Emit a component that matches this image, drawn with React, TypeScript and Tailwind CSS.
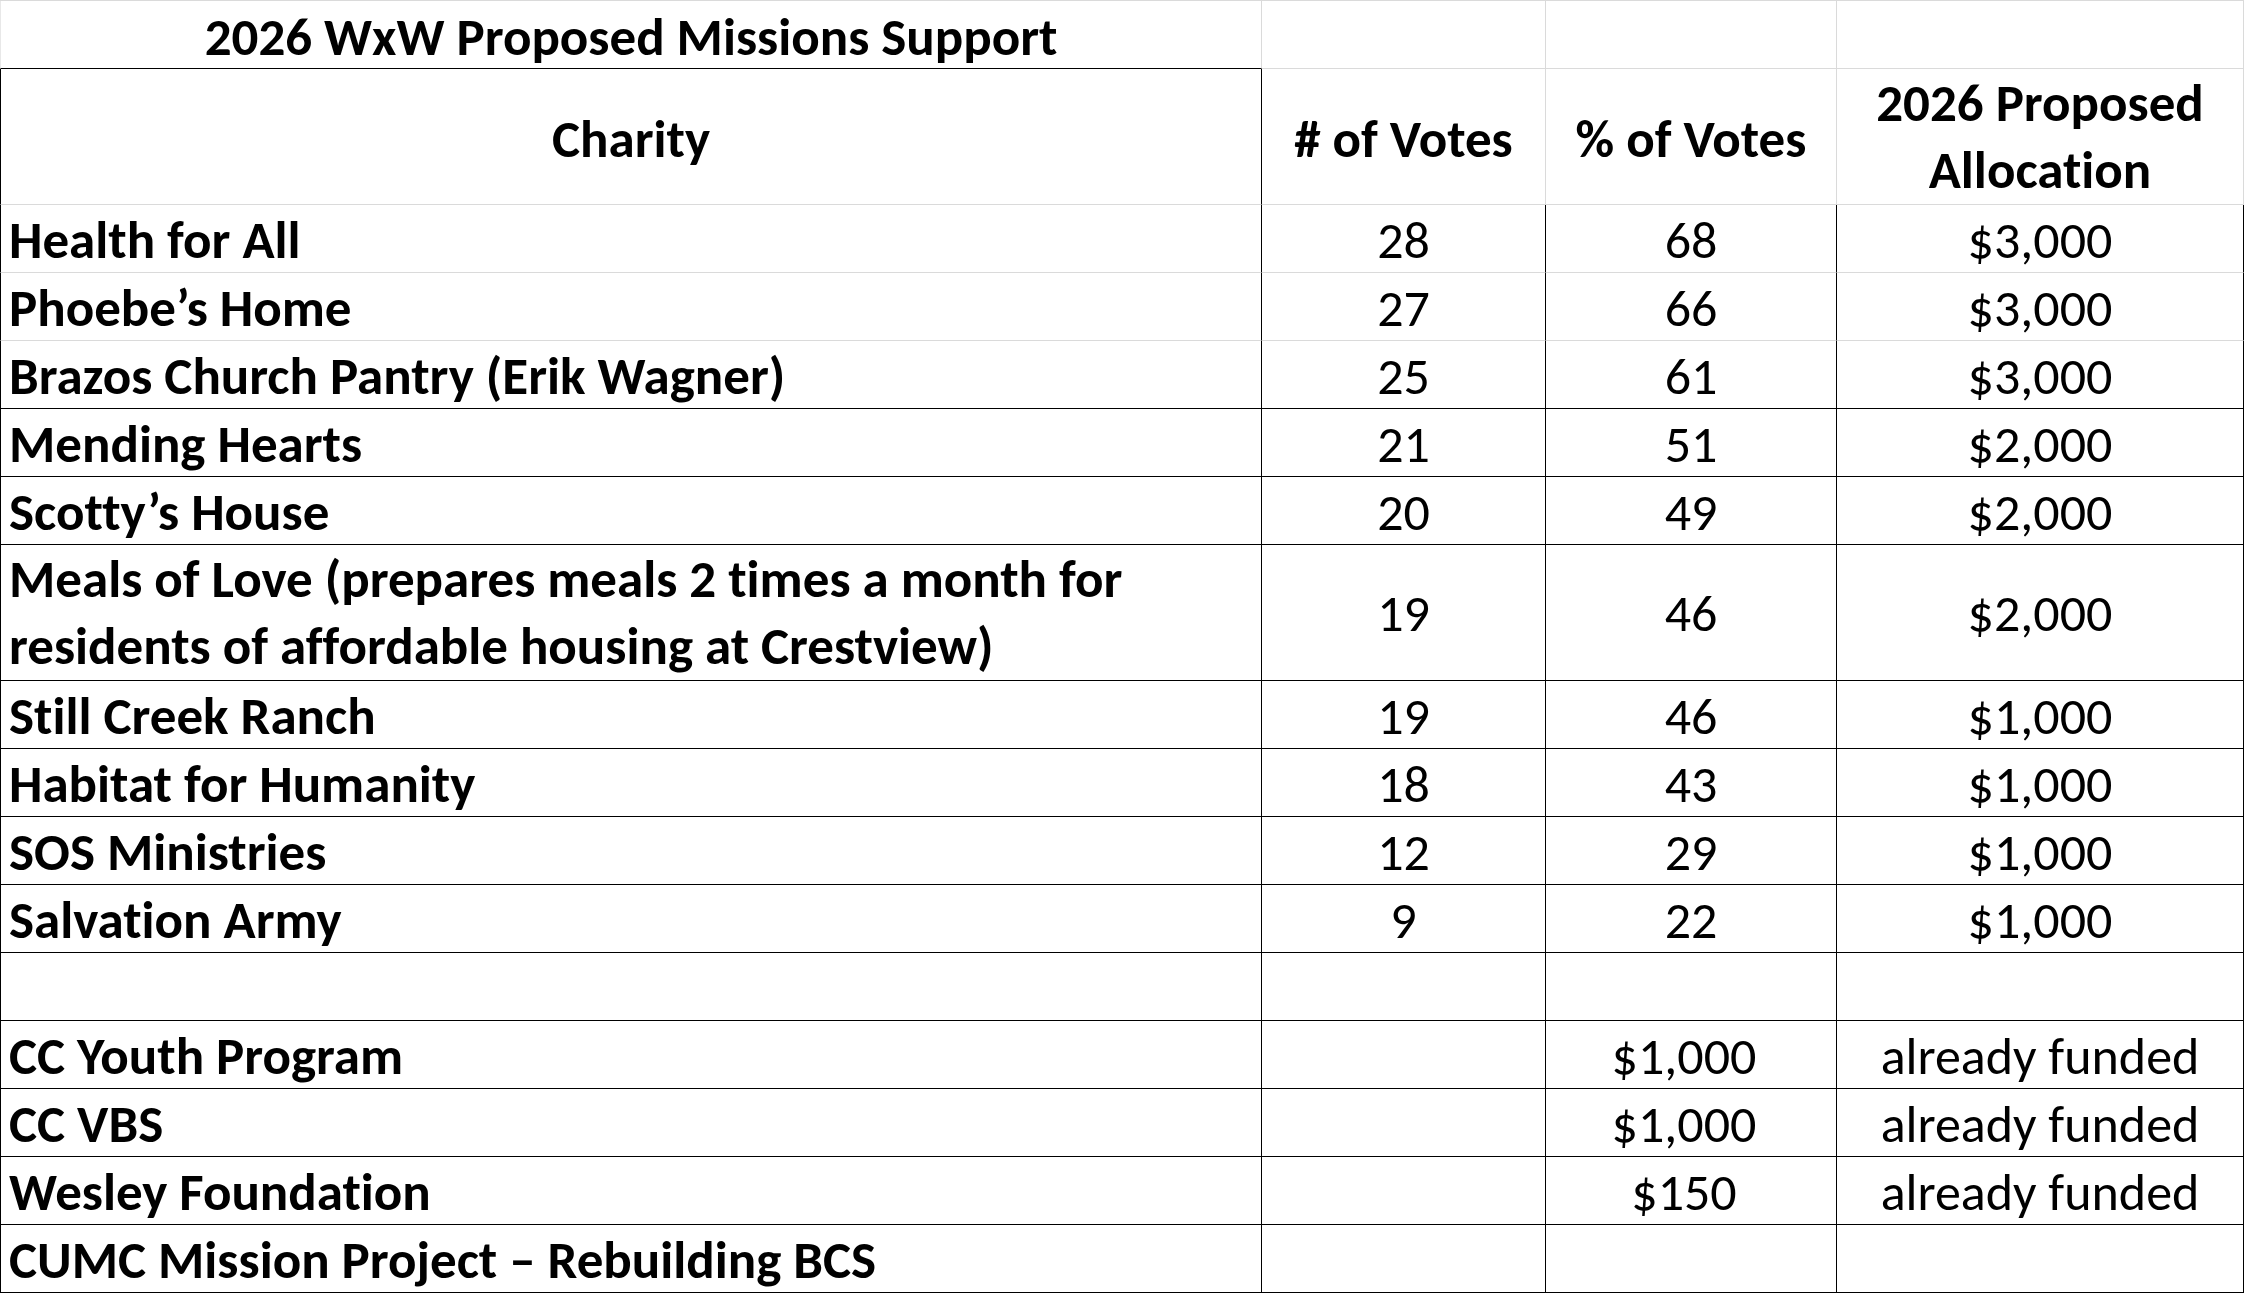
import React from "react";

type RowData = {
  name: string;
  votes?: string;
  pct?: string;
  alloc?: string;
  bottom: "gray" | "black";
  tall?: boolean;
  pctPad?: boolean;
};

const rows: RowData[] = [
  { name: "Health for All", votes: "28", pct: "68", alloc: "$3,000", bottom: "gray" },
  { name: "Phoebe\u2019s Home", votes: "27", pct: "66", alloc: "$3,000", bottom: "gray" },
  { name: "Brazos Church Pantry (Erik Wagner)", votes: "25", pct: "61", alloc: "$3,000", bottom: "black" },
  { name: "Mending Hearts", votes: "21", pct: "51", alloc: "$2,000", bottom: "black" },
  { name: "Scotty\u2019s House", votes: "20", pct: "49", alloc: "$2,000", bottom: "black" },
  {
    name: "Meals of Love (prepares meals 2 times a month for residents of affordable housing at Crestview)",
    votes: "19",
    pct: "46",
    alloc: "$2,000",
    bottom: "black",
    tall: true,
  },
  { name: "Still Creek Ranch", votes: "19", pct: "46", alloc: "$1,000", bottom: "black" },
  { name: "Habitat for Humanity", votes: "18", pct: "43", alloc: "$1,000", bottom: "black" },
  { name: "SOS Ministries", votes: "12", pct: "29", alloc: "$1,000", bottom: "black" },
  { name: "Salvation Army", votes: "9", pct: "22", alloc: "$1,000", bottom: "black" },
  { name: "", bottom: "black" },
  { name: "CC Youth Program", pct: "$1,000", alloc: "already funded", bottom: "black", pctPad: true },
  { name: "CC VBS", pct: "$1,000", alloc: "already funded", bottom: "black", pctPad: true },
  { name: "Wesley Foundation", pct: "$150", alloc: "already funded", bottom: "black", pctPad: true },
  { name: "CUMC Mission Project \u2013 Rebuilding BCS", bottom: "black" },
];

function DataRow({ r }: { r: RowData }) {
  const h = r.tall ? "h-[136px]" : "h-[68px]";
  const bb = r.bottom === "black" ? "border-b-black" : "border-b-[#dadada]";
  const numAlign = r.tall ? "items-center" : "items-end";
  return (
    <>
      <div
        className={`${h} ${bb} border-l border-l-black border-r border-r-black border-b flex items-end pl-[8px] pr-[8px] font-bold text-[53px] ${
          r.tall ? "leading-[67px]" : "leading-[64px] whitespace-nowrap"
        }`}
      >
        <span>{r.name}</span>
      </div>
      <div className={`${h} ${bb} border-r border-r-black border-b flex ${numAlign} justify-center text-[52px] leading-[64px]`}>
        <span>{r.votes ?? ""}</span>
      </div>
      <div
        className={`${h} ${bb} border-r border-r-black border-b flex ${numAlign} justify-center text-[52px] leading-[64px] ${
          r.pctPad ? "pr-[14px]" : ""
        }`}
      >
        <span>{r.pct ?? ""}</span>
      </div>
      <div className={`${h} ${bb} border-r border-r-black border-b flex ${numAlign} justify-center text-[52px] leading-[64px] whitespace-nowrap`}>
        <span>{r.alloc ?? ""}</span>
      </div>
    </>
  );
}

export default function App() {
  return (
    <div className="w-[2244px] h-[1293px] bg-white text-black font-[Carlito,Calibri,sans-serif] [font-variant-ligatures:none] overflow-hidden">
      <div className="grid grid-cols-[1262px_284px_291px_407px] border-t border-t-[#dadada]">
        {/* Title row */}
        <div className="h-[68px] border-l border-l-[#e8e8e8] border-r border-r-[#dadada] border-b border-b-black flex items-end justify-center font-bold text-[53px] leading-[62px] whitespace-nowrap">
          <span>2026 WxW Proposed Missions Support</span>
        </div>
        <div className="h-[68px] border-r border-r-[#dadada] border-b border-b-[#dadada]" />
        <div className="h-[68px] border-r border-r-[#dadada] border-b border-b-[#dadada]" />
        <div className="h-[68px] border-r border-r-[#dadada] border-b border-b-[#dadada]" />

        {/* Header row */}
        <div className="h-[136px] pt-[6px] border-l border-l-black border-r border-r-black border-b border-b-[#dadada] flex items-center justify-center font-bold text-[53px] leading-[67px]">
          <span>Charity</span>
        </div>
        <div className="h-[136px] pt-[6px] border-r border-r-[#dadada] border-b border-b-[#dadada] flex items-center justify-center font-bold text-[53px] leading-[67px] whitespace-nowrap">
          <span># of Votes</span>
        </div>
        <div className="h-[136px] pt-[6px] border-r border-r-[#dadada] border-b border-b-[#dadada] flex items-center justify-center font-bold text-[53px] leading-[67px] whitespace-nowrap">
          <span>% of Votes</span>
        </div>
        <div className="h-[136px] border-r border-r-[#dadada] border-b border-b-[#dadada] flex items-center justify-center text-center font-bold text-[53px] leading-[67px] whitespace-nowrap">
          <span>
            2026 Proposed
            <br />
            Allocation
          </span>
        </div>

        {rows.map((r, i) => (
          <DataRow key={i} r={r} />
        ))}
      </div>
    </div>
  );
}
